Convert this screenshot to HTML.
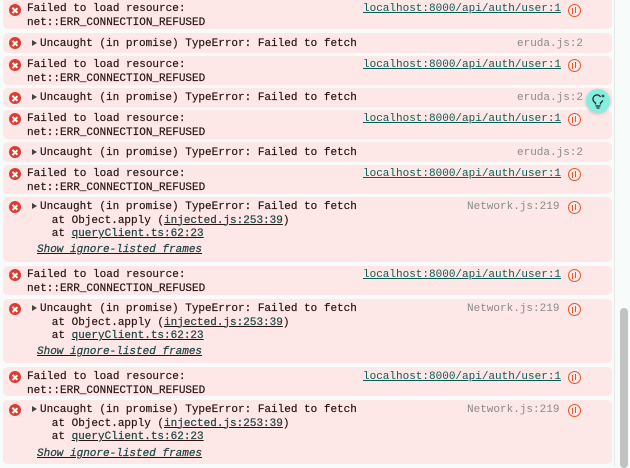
<!DOCTYPE html>
<html><head><meta charset="utf-8"><style>
body{margin:0;width:630px;height:466px;overflow:hidden;background:#f7fbfa;font-family:"Liberation Mono",monospace;font-size:11px;color:#2a1414;position:relative}
.r{position:absolute;left:3px;width:609px;background:#fde7e7;border-radius:5px}
.t{position:absolute;left:27px;white-space:pre;line-height:13.5px;margin-top:2px;-webkit-text-stroke:0.2px #2a1414}
.x{position:absolute;left:9px;width:12px;height:12px;border-radius:50%;background:#dc3b31}
.x:before,.x:after{content:"";position:absolute;left:5.25px;top:2.5px;width:1.5px;height:7px;background:#fff;transform:rotate(45deg)}
.x:after{transform:rotate(-45deg)}
.lk{position:absolute;color:#0b5c55;text-decoration:underline;white-space:pre;margin-top:2px}
.src{position:absolute;color:#8a8a8a;white-space:pre;margin-top:2px}
.ic{position:absolute;left:568px;width:13px;height:13px;border:1.4px solid #e2582a;border-radius:50%;box-sizing:border-box}
.ic:before{content:"";position:absolute;left:2.7px;top:2.5px;width:1.3px;height:6px;background:#e2582a}
.ic:after{content:"";position:absolute;left:5.7px;top:1.5px;width:1.3px;height:6px;background:#e2582a}
.tri{display:inline-block;width:0;height:0;border-left:5px solid #444;border-top:3.5px solid transparent;border-bottom:3.5px solid transparent;margin-right:3px;vertical-align:0}
u{color:#0b5c55}
i.s{color:#0b5c55;text-decoration:underline}
</style></head><body>
<div style="position:absolute;left:614px;top:0;width:1px;height:466px;background:#e4e8e7"></div>
<div style="position:absolute;left:620px;top:308px;width:8px;height:160px;background:#c2c2c2;border-radius:4px"></div>

<div class="r" style="top:-4px;height:33px"></div>
<div class="x" style="top:4px"></div><div class="t" style="top:1px">Failed to load resource:
net::ERR_CONNECTION_REFUSED</div><div class="lk" style="top:1px;left:363px">localhost:8000/api/auth/user:1</div><div class="ic" style="top:4px"></div>

<div class="r" style="top:33px;height:20px"></div>
<div class="x" style="top:37px"></div><div class="t" style="top:36px;left:32px"><span class="tri"></span>Uncaught (in promise) TypeError: Failed to fetch</div><div class="src" style="top:36px;left:517px">eruda.js:2</div>

<div class="r" style="top:56px;height:29px"></div>
<div class="x" style="top:59px"></div><div class="t" style="top:57px">Failed to load resource:
net::ERR_CONNECTION_REFUSED</div><div class="lk" style="top:57px;left:363px">localhost:8000/api/auth/user:1</div><div class="ic" style="top:59px"></div>

<div class="r" style="top:88px;height:19px"></div>
<div class="x" style="top:92px"></div><div class="t" style="top:90px;left:32px"><span class="tri"></span>Uncaught (in promise) TypeError: Failed to fetch</div><div class="src" style="top:90px;left:517px">eruda.js:2</div>

<div class="r" style="top:110px;height:29px"></div>
<div class="x" style="top:113px"></div><div class="t" style="top:111px">Failed to load resource:
net::ERR_CONNECTION_REFUSED</div><div class="lk" style="top:111px;left:363px">localhost:8000/api/auth/user:1</div><div class="ic" style="top:113px"></div>

<div class="r" style="top:142px;height:20px"></div>
<div class="x" style="top:146px"></div><div class="t" style="top:145px;left:32px"><span class="tri"></span>Uncaught (in promise) TypeError: Failed to fetch</div><div class="src" style="top:145px;left:517px">eruda.js:2</div>

<div class="r" style="top:165px;height:29px"></div>
<div class="x" style="top:168px"></div><div class="t" style="top:166px">Failed to load resource:
net::ERR_CONNECTION_REFUSED</div><div class="lk" style="top:166px;left:363px">localhost:8000/api/auth/user:1</div><div class="ic" style="top:168px"></div>

<div class="r" style="top:197px;height:65px"></div>
<div class="x" style="top:201px"></div><div class="t" style="top:199px;left:32px"><span class="tri"></span>Uncaught (in promise) TypeError: Failed to fetch
   at Object.apply (<u>injected.js:253:39</u>)
   at <u>queryClient.ts:62:23</u></div><div class="t" style="top:242px;left:37px"><i class="s">Show ignore-listed frames</i></div><div class="src" style="top:199px;left:467px">Network.js:219</div><div class="ic" style="top:201px"></div>

<div class="r" style="top:266px;height:29px"></div>
<div class="x" style="top:269px"></div><div class="t" style="top:267px">Failed to load resource:
net::ERR_CONNECTION_REFUSED</div><div class="lk" style="top:267px;left:363px">localhost:8000/api/auth/user:1</div><div class="ic" style="top:269px"></div>

<div class="r" style="top:299px;height:64px"></div>
<div class="x" style="top:303px"></div><div class="t" style="top:301px;left:32px"><span class="tri"></span>Uncaught (in promise) TypeError: Failed to fetch
   at Object.apply (<u>injected.js:253:39</u>)
   at <u>queryClient.ts:62:23</u></div><div class="t" style="top:344px;left:37px"><i class="s">Show ignore-listed frames</i></div><div class="src" style="top:301px;left:467px">Network.js:219</div><div class="ic" style="top:303px"></div>

<div class="r" style="top:367px;height:29px"></div>
<div class="x" style="top:371px"></div><div class="t" style="top:369px">Failed to load resource:
net::ERR_CONNECTION_REFUSED</div><div class="lk" style="top:369px;left:363px">localhost:8000/api/auth/user:1</div><div class="ic" style="top:371px"></div>

<div class="r" style="top:400px;height:64px"></div>
<div class="x" style="top:404px"></div><div class="t" style="top:402px;left:32px"><span class="tri"></span>Uncaught (in promise) TypeError: Failed to fetch
   at Object.apply (<u>injected.js:253:39</u>)
   at <u>queryClient.ts:62:23</u></div><div class="t" style="top:446px;left:37px"><i class="s">Show ignore-listed frames</i></div><div class="src" style="top:402px;left:467px">Network.js:219</div><div class="ic" style="top:404px"></div>

<div style="position:absolute;left:586px;top:89px;width:24px;height:24px;border-radius:50%;background:#85eedf;box-shadow:0 1px 3px rgba(0,0,0,.2)">
<svg width="24" height="24" viewBox="0 0 24 24"><path d="M9.5 15.5v-1.5c-1.5-1-2.5-2.3-2.5-4a4 4 0 0 1 7.5-2" fill="none" stroke="#222" stroke-width="1.3"/><path d="M14.5 15.5v-1.5c1-0.7 1.8-1.5 2.2-2.6" fill="none" stroke="#222" stroke-width="1.3"/><path d="M9.5 17h5M10.5 19h3" stroke="#222" stroke-width="1.3"/><path d="M17 5l.6 1.4 1.4.6-1.4.6-.6 1.4-.6-1.4-1.4-.6 1.4-.6z" fill="#222"/></svg>
</div>
</body></html>
